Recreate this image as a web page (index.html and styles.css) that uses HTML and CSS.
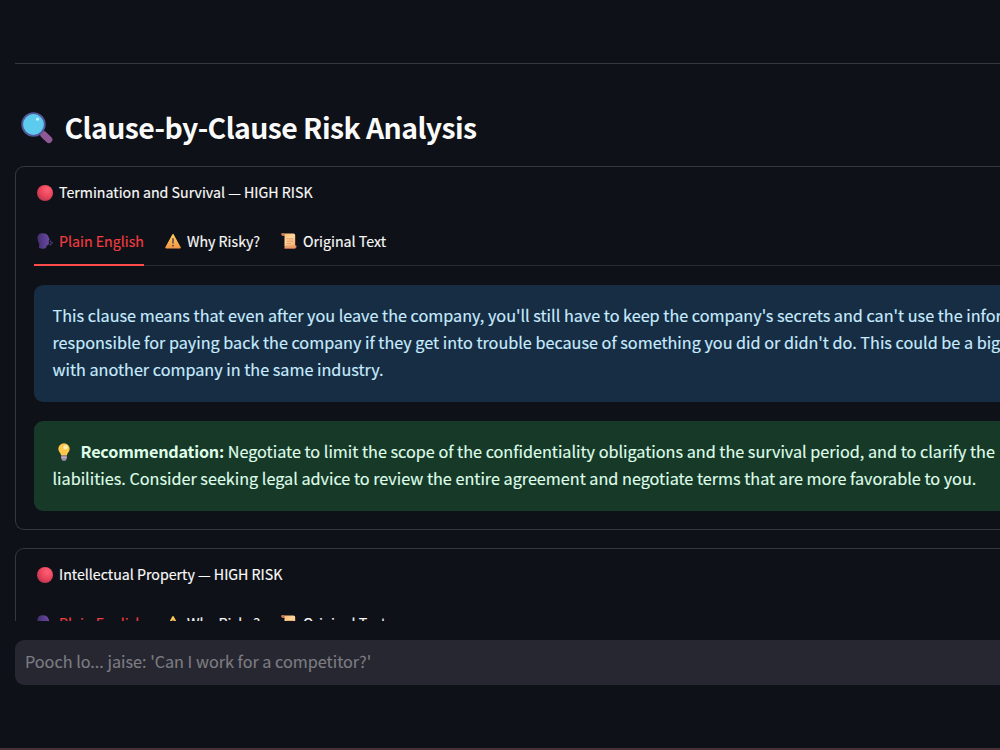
FILE: index.html
```
<!DOCTYPE html>
<html lang="en">
<head>
    <meta charset="UTF-8">
    <meta name="viewport" content="width=device-width, initial-scale=1.0">
    <title>Clause-by-Clause Risk Analysis</title>
    <link rel="stylesheet" href="styles.css">
</head>
<body>
    <!-- icons used more than once -->
    <svg class="defs" width="0" height="0">
        <defs>
            <radialGradient id="red" cx="65%" cy="30%" r="75%">
                <stop offset="0" stop-color="#ff6177"/>
                <stop offset="0.6" stop-color="#e8445a"/>
                <stop offset="1" stop-color="#bd3550"/>
            </radialGradient>
            <linearGradient id="purple" x1="0" x2="1">
                <stop offset="0" stop-color="#43306f"/>
                <stop offset="1" stop-color="#6b4aa5"/>
            </linearGradient>
            <linearGradient id="amber" x1="0" y1="0" x2="0" y2="1">
                <stop offset="0" stop-color="#ffce55"/>
                <stop offset="1" stop-color="#f39a49"/>
            </linearGradient>
            <linearGradient id="paper" x1="0" y1="0" x2="1" y2="1">
                <stop offset="0" stop-color="#f5b46c"/>
                <stop offset="0.5" stop-color="#ffd59b"/>
                <stop offset="1" stop-color="#f2ac70"/>
            </linearGradient>
        </defs>
        <symbol id="dot" viewBox="0 0 16 16">
            <circle cx="8" cy="8" r="8" fill="url(#red)"/>
        </symbol>
        <symbol id="speak" viewBox="0 0 16 16">
            <path d="M.5 4.500C.5 1.800 2.800.3 6 .3c3 0 5 1.400 5.600 3.800l1 2.600-.9.8.2 2.800c0 1.400-.6 2-2.200 2.100L9 15c-1.500.9-5 .9-7 0l.3-4.200C1.200 9 .5 7 .5 4.500z" fill="url(#purple)"/>
            <circle cx="13.400" cy="8.300" r=".9" fill="#54408a"/>
            <circle cx="15" cy="9.800" r=".9" fill="#54408a"/>
            <circle cx="13.500" cy="11.500" r=".9" fill="#54408a"/>
        </symbol>
        <symbol id="warn" viewBox="0 0 16 16">
            <path d="M8 1.800 15 14.600H1z" fill="url(#amber)" stroke="url(#amber)" stroke-width="1.600" stroke-linejoin="round"/>
            <path d="M8 5.800v4.300" stroke="#5a4253" stroke-width="1.500" stroke-linecap="round"/>
            <circle cx="8" cy="12.700" r=".9" fill="#5a4253"/>
        </symbol>
        <symbol id="scroll" viewBox="0 0 16 16">
            <path d="M1 .5h11.500q1.700 0 1.700 1.700V13H3.500V2.500H1.500Q.5 2.500.5 1z" fill="url(#paper)"/>
            <path d="M.3.3h3L3.600 3H1.600Q0 2.500.3.3z" fill="#c87450"/>
            <path d="M3.500 12.500H15.300q.4 3-2 3H3.500z" fill="#e9a069"/>
            <path d="M3.500 15.400h10q1.500-.2 1.800-1.800" fill="none" stroke="#c86b50" stroke-width=".7"/>
            <path d="M5.500 5.800h6.500M5.500 8.200h6.500M5.500 10.600h4.500" stroke="#df8f5f" stroke-width=".8"/>
        </symbol>
    </svg>

    <main class="content">
        <hr class="divider">

        <h2 class="title">
            <svg class="title-icon" viewBox="0 0 32 32">
                <path d="M20.500 20.500l3 3" stroke="#6b4a84" stroke-width="3"/>
                <path d="M22.800 22.800l5 4.800" stroke="#8e5894" stroke-width="7" stroke-linecap="round"/>
                <circle cx="12.500" cy="12.500" r="11.300" fill="#5dcbed" stroke="#51599a" stroke-width="1.800"/>
                <circle cx="16.500" cy="7.200" r="1.600" fill="#b9edff"/>
            </svg>
            <span class="title-text">Clause-by-Clause Risk Analysis</span>
        </h2>

        <section class="clause">
            <div class="clause-head"><svg class="icon"><use href="#dot"/></svg><span>Termination and Survival — HIGH RISK</span></div>
            <div class="tabs">
                <div class="tab active"><svg class="icon"><use href="#speak"/></svg><span>Plain English</span></div>
                <div class="tab"><svg class="icon"><use href="#warn"/></svg><span>Why Risky?</span></div>
                <div class="tab"><svg class="icon"><use href="#scroll"/></svg><span>Original Text</span></div>
            </div>
            <div class="alert info">
                <div class="line">This clause means that even after you leave the company, you'll still have to keep the company's secrets and can't use the infor</div>
                <div class="line">responsible for paying back the company if they get into trouble because of something you did or didn't do. This could be a big</div>
                <div class="line">with another company in the same industry.</div>
            </div>
            <div class="alert success">
                <div class="line"><svg class="bulb" viewBox="0 0 14 18">
                    <path d="M7 .3a5.700 5.700 0 0 1 5.700 5.700c0 2.700-2.500 3.900-2.900 6.600H4.200C3.800 9.900 1.300 8.700 1.300 6A5.700 5.700 0 0 1 7 .3z" fill="#ffc84d"/>
                    <circle cx="8.600" cy="4.200" r="2.200" fill="#ffedac"/>
                    <path d="M4.200 12.500h5.600v3.200L8.500 17.700h-3L4.200 15.700z" fill="#a58bab"/>
                    <path d="M4.200 14.300h5.600" stroke="#d2bfd3" stroke-width=".8"/>
                </svg><strong>Recommendation:</strong> Negotiate to limit the scope of the confidentiality obligations and the survival period, and to clarify the</div>
                <div class="line">liabilities. Consider seeking legal advice to review the entire agreement and negotiate terms that are more favorable to you.</div>
            </div>
        </section>

        <section class="clause">
            <div class="clause-head"><svg class="icon"><use href="#dot"/></svg><span>Intellectual Property — HIGH RISK</span></div>
            <div class="tabs">
                <div class="tab active"><svg class="icon"><use href="#speak"/></svg><span>Plain English</span></div>
                <div class="tab"><svg class="icon"><use href="#warn"/></svg><span>Why Risky?</span></div>
                <div class="tab"><svg class="icon"><use href="#scroll"/></svg><span>Original Text</span></div>
            </div>
        </section>
    </main>

    <footer class="chat">
        <input class="chat-input" type="text" placeholder="Pooch lo... jaise: 'Can I work for a competitor?'">
    </footer>
</body>
</html>
```
FILE: styles.css
```
* {
    box-sizing: border-box;
}

body {
    margin: 0;
    height: 750px;
    display: flex;
    flex-direction: column;
    overflow: hidden;
    background-color: #0e1117;
    color: #fafafa;
    font-family: "Noto Sans CJK SC", "Noto Sans", sans-serif;
    font-size: 16.2px;
    -webkit-text-stroke: 0.15px;
}

.defs {
    position: absolute;
}

.content {
    height: 621px;
    padding: 63px 0 0 15px;
    overflow: hidden;
}

.divider {
    margin: 0;
    border: 0;
    height: 1px;
    background-color: #36383e;
}

.title {
    display: flex;
    align-items: center;
    margin: 0;
    padding-top: 25px;
    height: 102px;
    font-size: 28.4px;
    font-weight: 600;
    line-height: 36px;
    letter-spacing: -0.56px;
    white-space: nowrap;
    -webkit-text-stroke: 0;
}

.title-icon {
    width: 32px;
    height: 32px;
    margin: 0 11.5px 0 6px;
}

.title-text {
    margin-top: -2px;
}

.clause {
    height: 364px;
    margin: 0 0 18px;
    padding: 0 0 0 18px;
    border: 1px solid #36383e;
    border-right: 0;
    border-radius: 9px 0 0 9px;
}

.clause-head {
    display: flex;
    align-items: center;
    height: 51px;
    padding-left: 3px;
    font-size: 14.2px;
    line-height: 24px;
}

.clause-head span,
.tab span {
    margin-top: -1px;
}

.icon {
    width: 16px;
    height: 16px;
    margin-right: 6px;
    flex: none;
}

.tabs {
    display: flex;
    gap: 18px;
    height: 48px;
    border-bottom: 1px solid #2a2b31;
}

.tab {
    display: flex;
    align-items: center;
    height: 48px;
    padding-left: 3px;
    border-bottom: 2px solid transparent;
    font-size: 14.2px;
    line-height: 24px;
}

.tab.active {
    color: #f23d42;
    border-bottom-color: #ff4b4b;
}

.alert {
    padding: 16.5px 0 0 18.5px;
    border-radius: 9px 0 0 9px;
}

.info {
    height: 117px;
    margin-top: 19px;
    background-color: #172d43;
    color: #c7ebff;
}

.success {
    height: 90px;
    margin-top: 19px;
    background-color: #173928;
    color: #dffde9;
}

.line {
    height: 27.3px;
    line-height: 27.3px;
    white-space: nowrap;
}

.line strong {
    letter-spacing: -0.2px;
    -webkit-text-stroke: 0;
}

.bulb {
    width: 14px;
    height: 18px;
    margin: 0 9.5px 0 4.5px;
    vertical-align: -3px;
}

.chat {
    flex: 1;
    padding: 19px 0 0 15px;
    border-bottom: 2px solid #47323a;
}

.chat-input {
    width: 100%;
    height: 45px;
    padding: 0 10px 3px;
    border: 0;
    border-radius: 9px 0 0 9px;
    background-color: #262730;
    color: #fafafa;
    font-family: inherit;
    font-size: 16.2px;
    -webkit-text-stroke: 0.15px;
}

.chat-input::placeholder {
    color: #7c7c82;
}
```
